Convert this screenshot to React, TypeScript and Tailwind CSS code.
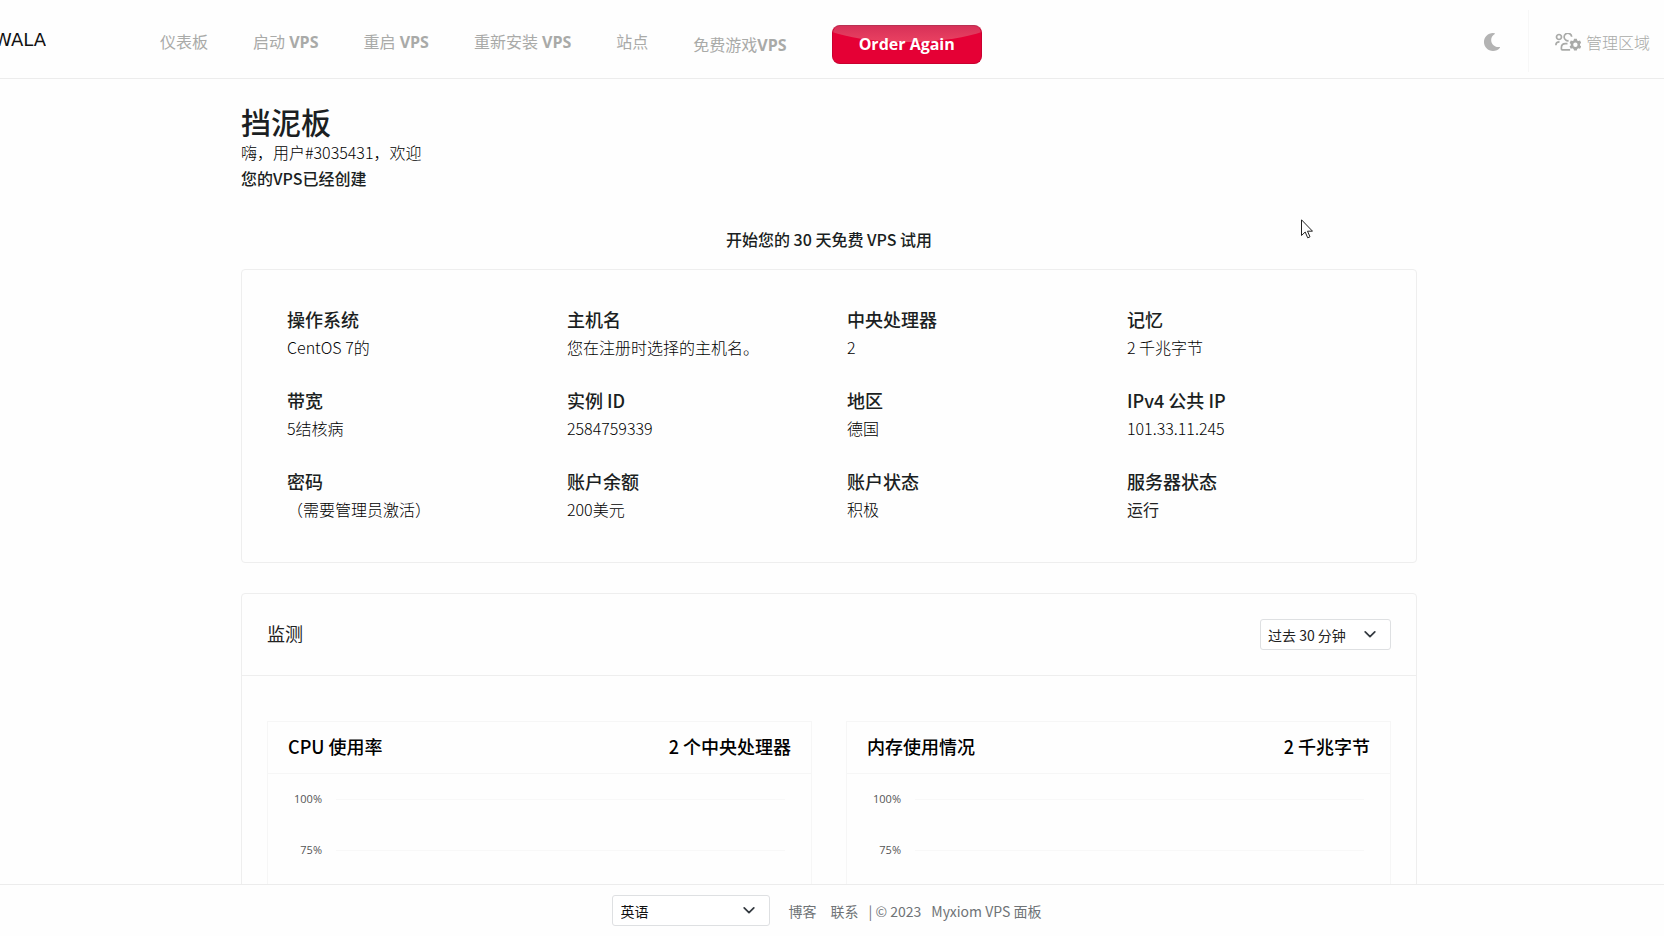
import React from "react";
import { FaMoon } from "react-icons/fa";

type NavItem = {
  label: string;
  /** Latin suffix, set heavier than the Chinese part */
  suffix?: string;
};

const NAV_ITEMS: NavItem[] = [
  { label: "仪表板" },
  { label: "启动", suffix: "VPS" },
  { label: "重启", suffix: "VPS" },
  { label: "重新安装", suffix: "VPS" },
  { label: "站点" },
];

const DETAILS: { title: string; value: string; strong?: boolean }[] = [
  { title: "操作系统", value: "CentOS 7的" },
  { title: "主机名", value: "您在注册时选择的主机名。" },
  { title: "中央处理器", value: "2" },
  { title: "记忆", value: "2 千兆字节" },
  { title: "带宽", value: "5结核病" },
  { title: "实例 ID", value: "2584759339" },
  { title: "地区", value: "德国" },
  { title: "IPv4 公共 IP", value: "101.33.11.245" },
  { title: "密码", value: "（需要管理员激活）" },
  { title: "账户余额", value: "200美元" },
  { title: "账户状态", value: "积极" },
  { title: "服务器状态", value: "运行", strong: true },
];

const CHARTS = [
  { title: "CPU 使用率", total: "2 个中央处理器" },
  { title: "内存使用情况", total: "2 千兆字节" },
];

const TICKS = ["100%", "75%"];

function Chevron() {
  return (
    <svg
      viewBox="0 0 16 16"
      className="pointer-events-none absolute top-2 right-3.5 size-3.5"
      fill="none"
      stroke="#343a40"
      strokeWidth="2"
      strokeLinecap="round"
      strokeLinejoin="round"
      aria-hidden
    >
      <path d="m2.500 5.500 5.500 5.500 5.500-5.500" />
    </svg>
  );
}

function UsersGearIcon() {
  return (
    <svg viewBox="0 0 26 18" className="h-[18px] w-[26px]" fill="none" stroke="currentColor" strokeWidth="1.7" aria-hidden>
      <circle cx="4" cy="4" r="2.5" />
      <path d="M.9 12.2c0-2 1.300-3.300 3.600-3.300" />
      <path d="M16.700 3.700A3.800 3.800 0 1 0 11 7.300c.8.500 1.700.6 2.600.4" />
      <path d="M12.500 10.600h-2.100c-2.400 0-4 1.700-4 4v1.500c0 .5.300.8.800.8h7.900" />
      <path
        fill="currentColor"
        stroke="none"
        fillRule="evenodd"
        d="M19 5.800h2.800l.4 1.600 1.200.7 1.600-.5 1.200 2.300-1.200 1.100v1.400l1.200 1.100-1.200 2.300-1.600-.5-1.200.7-.4 1.600H19l-.4-1.600-1.200-.7-1.600.5-1.200-2.300 1.200-1.100V11l-1.200-1.100 1.200-2.300 1.600.5 1.200-.7zm1.400 3.700a2.200 2.200 0 1 0 0 4.400 2.200 2.200 0 0 0 0-4.400z"
      />
    </svg>
  );
}

function Header() {
  return (
    <header className="flex shrink-0 items-stretch border-b border-[#ececec] pr-[14px] text-base leading-6 text-[#a9aaa8]">
      <a href="#" className="mr-[114px] flex h-[78px] w-[46px] items-center justify-end overflow-hidden pt-0.5 font-['DejaVu_Sans',sans-serif] text-lg text-[#111]">
        WALA
      </a>
      <nav className="flex items-center gap-[45px] whitespace-nowrap" aria-label="主导航">
        {NAV_ITEMS.map((item) => (
          <a key={item.label} href="#" className="pt-1">
            {item.label}
            {item.suffix ? (
              <span className="font-['Open_Sans',sans-serif] font-bold"> {item.suffix}</span>
            ) : null}
          </a>
        ))}
        <a href="#" className="pt-2.5">
          免费游戏<span className="font-['Open_Sans',sans-serif] font-bold">VPS</span>
        </a>
        <button
          type="button"
          className="relative mt-2.5 h-[39px] overflow-hidden rounded-lg border border-[#c9002f] border-t-[#b93152] bg-[#e50035] px-[26px] font-['Open_Sans',sans-serif] font-bold text-white"
        >
          <span className="absolute -inset-x-6 -top-10 h-14 rounded-[50%] bg-linear-to-b from-[#d63058] from-70% to-[#ea4161]" />
          <span className="relative">Order Again</span>
        </button>
      </nav>
      <div className="ml-auto flex items-center pt-1">
        <button type="button" aria-label="深色模式" className="mr-[27px] pt-0.5 text-[#b3b3b3]">
          <FaMoon className="size-[18px]" />
        </button>
        <a href="#" className="flex h-[62px] items-center gap-[5px] border-l border-[#f7f7f7] pt-0.5 pl-[26px] whitespace-nowrap">
          <UsersGearIcon />
          <span className="font-light">管理区域</span>
        </a>
      </div>
    </header>
  );
}

function DetailsCard() {
  return (
    <section className="grid grid-cols-4 gap-y-[25px] rounded-sm border border-[#eeeeee] pt-[34px] pr-[9px] pb-10 pl-[45px]">
      {DETAILS.map((detail) => (
        <div key={detail.title}>
          <h2 className="text-lg leading-[30px] font-medium text-[#1b1f22]">{detail.title}</h2>
          <p className={detail.strong ? "leading-[26px] text-[#222]" : "leading-[26px] font-light text-black"}>
            {detail.value}
          </p>
        </div>
      ))}
    </section>
  );
}

function ChartCard({ title, total }: { title: string; total: string }) {
  return (
    <article className="min-h-[320px] border border-[#f6f6f6]">
      <div className="flex h-[52px] items-center justify-between border-b border-[#f6f6f6] px-5 pb-1 text-lg font-medium text-black">
        <h3>{title}</h3>
        <span>{total}</span>
      </div>
      <div className="flex flex-col gap-[35px] pt-[17px] pr-[26px] pl-[18px]">
        {TICKS.map((tick) => (
          <div key={tick} className="flex items-center gap-3.5">
            <span className="w-9 text-right font-['Open_Sans',sans-serif] text-[11px] leading-4 text-[#555]">{tick}</span>
            <span className="h-px flex-1 bg-[#f8f8f8]" />
          </div>
        ))}
      </div>
    </article>
  );
}

function MonitoringCard() {
  return (
    <section className="mt-[30px] rounded-sm border border-[#eeeeee]">
      <div className="flex h-[82px] items-center justify-between border-b border-[#eeeeee] px-[25px]">
        <h2 className="pb-1 text-lg text-[#222]">监测</h2>
        <div className="relative">
          <select
            aria-label="时间范围"
            className="h-[31px] w-[131px] appearance-none rounded-[3px] border border-[#dee0e2] bg-white px-[7px] text-sm text-[#222]"
          >
            <option>过去 30 分钟</option>
          </select>
          <Chevron />
        </div>
      </div>
      <div className="grid grid-cols-2 gap-[34px] px-[25px] pt-[45px] pb-11">
        {CHARTS.map((chart) => (
          <ChartCard key={chart.title} title={chart.title} total={chart.total} />
        ))}
      </div>
    </section>
  );
}

function Footer() {
  return (
    <footer className="flex h-[52px] shrink-0 items-center justify-center border-t border-[#ececec] pr-[11px] text-sm whitespace-nowrap text-[#6f7376]">
      <div className="relative mr-[19px]">
        <select
          aria-label="语言"
          className="h-[31px] w-[158px] appearance-none rounded-[3px] border border-[#dee0e2] bg-white px-2 text-sm text-[#111]"
        >
          <option>英语</option>
        </select>
        <Chevron />
      </div>
      <a href="#" className="mr-3.5">博客</a>
      <a href="#" className="mr-2.5">联系</a>
      <span className="mr-2.5">| © 2023</span>
      <span>Myxiom VPS 面板</span>
    </footer>
  );
}

export default function App() {
  return (
    <div className="flex h-screen flex-col bg-[#fefefe] font-['Noto_Sans_CJK_SC',sans-serif] text-base text-[#1b1f22]">
      <Header />
      <main className="min-h-0 flex-1 overflow-y-auto pr-1.5 [scrollbar-width:none]">
        <div className="mx-auto max-w-[1176px]">
          <h1 className="pt-[22px] text-3xl leading-10 font-medium">挡泥板</h1>
          <p className="leading-[22px] font-light text-black">嗨，用户#3035431，欢迎</p>
          <p className="pt-0.5 leading-[26px] font-medium">您的VPS已经创建</p>
          <p className="pt-9 pb-[18px] text-center leading-6 font-medium">开始您的 30 天免费 VPS 试用</p>
          <DetailsCard />
          <MonitoringCard />
        </div>
      </main>
      <Footer />
      <svg
        viewBox="0 0 12 20"
        className="pointer-events-none fixed top-[219px] left-[1301px] h-5 w-3"
        fill="white"
        stroke="#222"
        strokeLinejoin="round"
        aria-hidden
      >
        <path d="M.5.8v15.700l3.700-3.500 2.500 5.800 2.300-1-2.500-5.600h5z" />
      </svg>
    </div>
  );
}
